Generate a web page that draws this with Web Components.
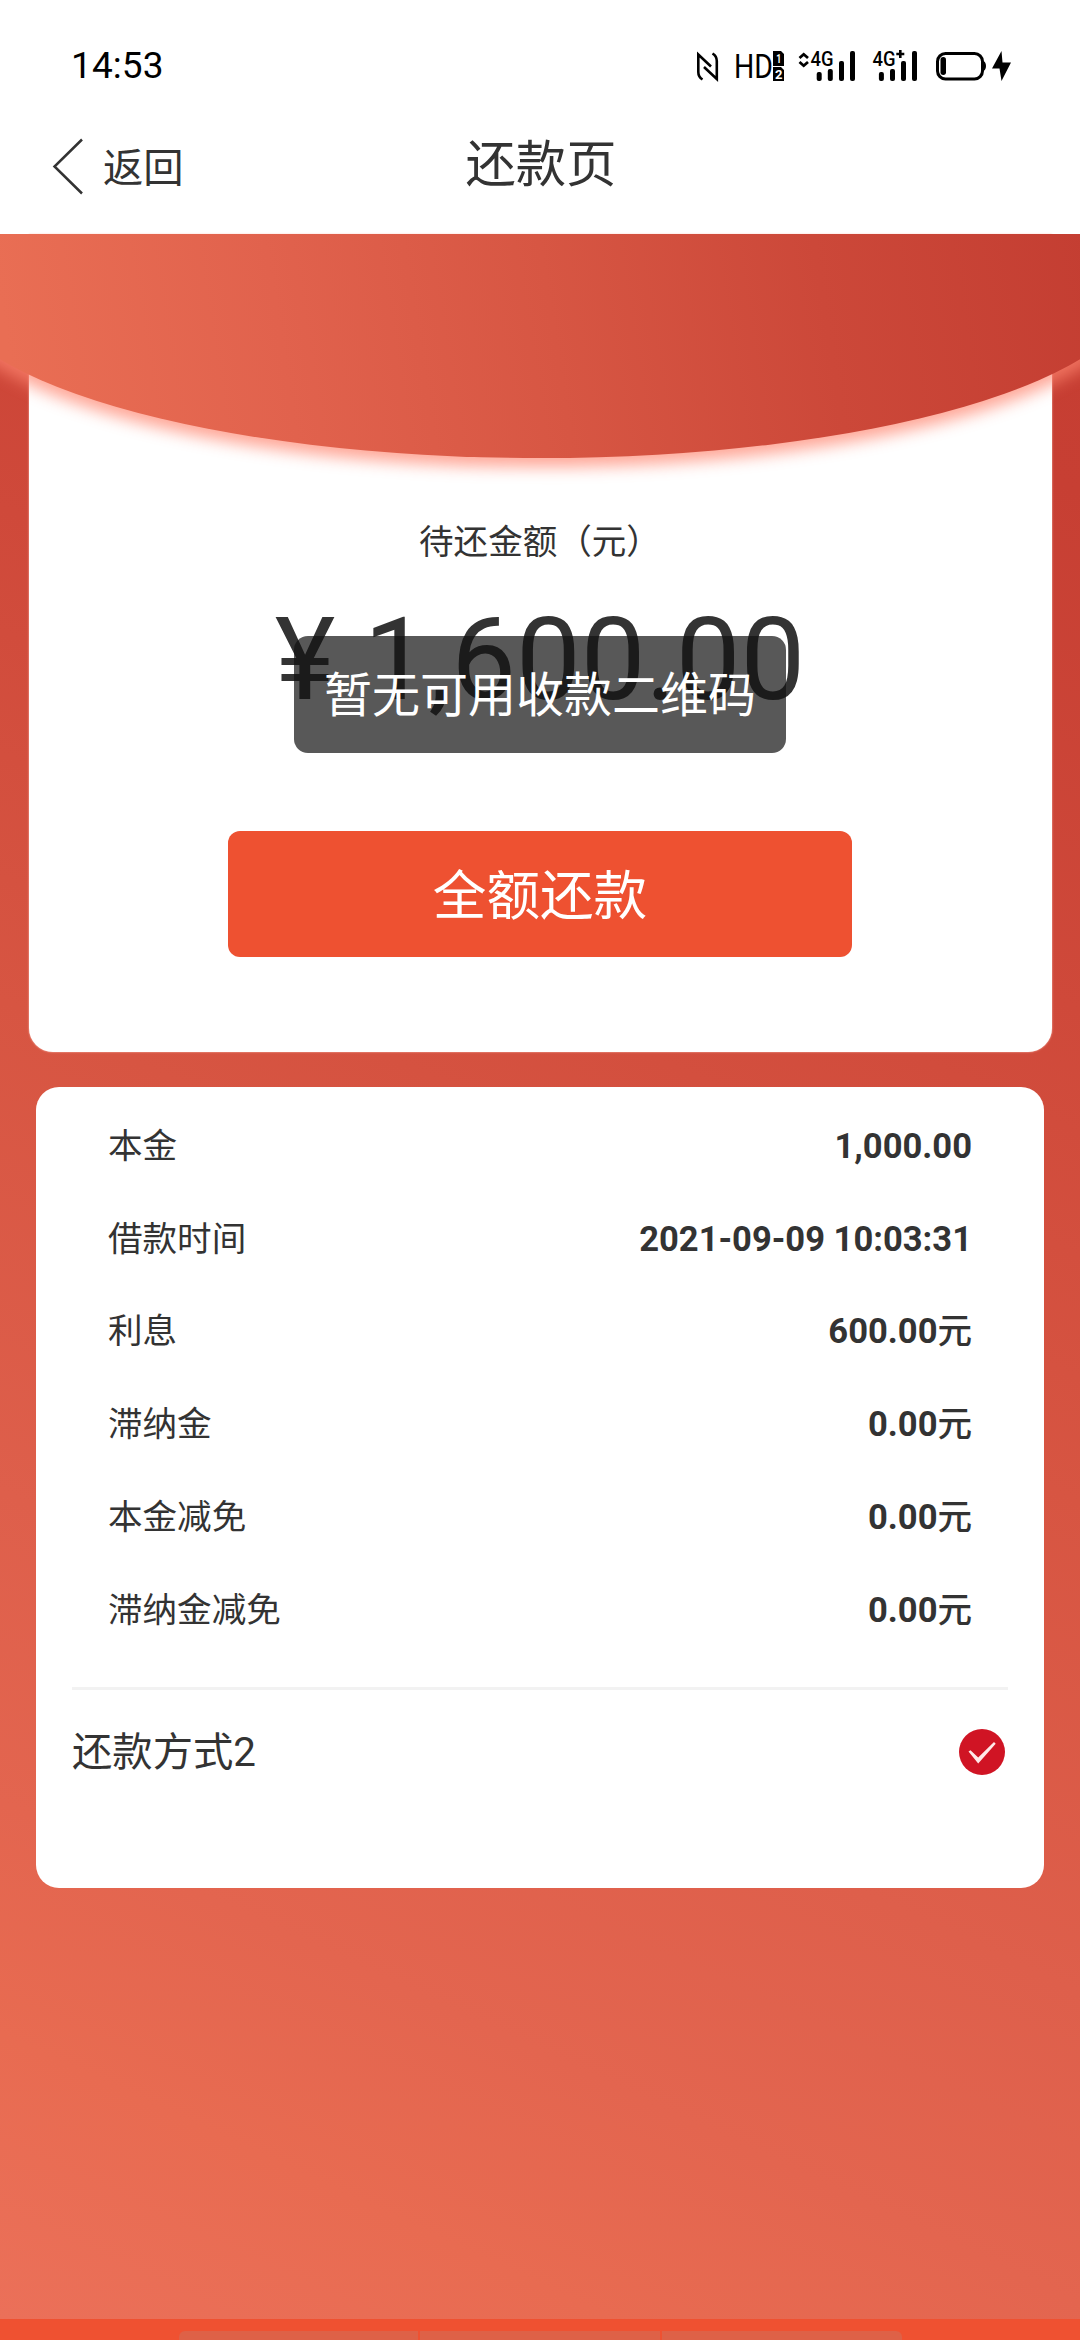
<!DOCTYPE html>
<html lang="zh-CN">
<head>
<meta charset="utf-8">
<title>还款页</title>
<style>
html,body{margin:0;padding:0;background:#fff}
body{width:1080px;height:2340px;overflow:hidden;color:#333;font-family:Roboto,"Noto Sans CJK SC",sans-serif}
</style>
</head>
<body>
<repay-page>
  <status-bar slot="top" time="14:53"></status-bar>
  <nav-header slot="top" back="返回">还款页</nav-header>
  <amount-card label="待还金额（元）" amount="¥ 1,600.00" action="全额还款"></amount-card>
  <detail-card>
    <detail-row label="本金">1,000.00</detail-row>
    <detail-row label="借款时间">2021-09-09 10:03:31</detail-row>
    <detail-row label="利息" unit="元">600.00</detail-row>
    <detail-row label="滞纳金" unit="元">0.00</detail-row>
    <detail-row label="本金减免" unit="元">0.00</detail-row>
    <detail-row label="滞纳金减免" unit="元">0.00</detail-row>
    <pay-method slot="method">还款方式2</pay-method>
  </detail-card>
  <bottom-strip slot="bottom"></bottom-strip>
  <toast-message slot="toast">暂无可用收款二维码</toast-message>
</repay-page>
<script>
const define = (name, render) => customElements.define(name, class extends HTMLElement {
  connectedCallback() {
    if (this.shadowRoot) return;
    this.attachShadow({ mode: 'open' }).innerHTML = render(k => this.getAttribute(k) || '');
  }
});

define('repay-page', () => `
<style>
:host{display:flex;flex-direction:column;width:1080px;height:2340px;position:relative;overflow:hidden}
main{flex:1;min-height:0;display:flex;flex-direction:column;gap:35px;
background:linear-gradient(205deg,#c53d32 0%,#c73f33 10%,#cf493a 30%,#d75542 49%,#de5f4b 68%,#e3654f 80%,#e86b51 89%,#eb7059 100%)}
</style>
<slot name="top"></slot><main><slot></slot></main><slot name="bottom"></slot><slot name="toast"></slot>`);

define('status-bar', a => `
<style>
:host{display:flex;justify-content:space-between;align-items:center;height:90px;box-sizing:border-box;padding:42px 60px 0 71px;color:#000}
time{font-size:37px;line-height:48px;letter-spacing:.1px}
svg{display:block}
text{font-family:Roboto,sans-serif}
</style>
<time>${a('time')}</time>
<svg width="330" height="48" viewBox="690 42 330 48" fill="none" stroke="#000">
  <path d="M702.500 79.500Q698.300 77 698.300 72V54.500L711 66.500M712.500 53.500Q716.800 56 716.800 61V79L704 67" stroke-width="2.600"/>
  <text x="734" y="77.900" font-size="33.500" fill="#000" stroke="none" textLength="39" lengthAdjust="spacingAndGlyphs">HD</text>
  <g fill="#000" stroke="none">
    <path d="M773 51h8l3 3v12h-11zM773 67h8l3 3v11h-11z"/>
    <text x="776.200" y="63" font-size="12" font-weight="700" style="fill:#fff" textLength="5" lengthAdjust="spacingAndGlyphs">1</text>
    <text x="775" y="79" font-size="13" font-weight="700" style="fill:#fff" textLength="7.500" lengthAdjust="spacingAndGlyphs">2</text>
    <text x="810.500" y="66" font-size="20.500" font-weight="500" textLength="23" lengthAdjust="spacingAndGlyphs">4G</text>
    <text x="872.500" y="66" font-size="20.500" font-weight="500" textLength="23" lengthAdjust="spacingAndGlyphs">4G</text>
    <rect x="816.700" y="72" width="5" height="9" rx="2"/><rect x="827.800" y="69" width="5" height="12" rx="2"/><rect x="839" y="61" width="5" height="20" rx="2"/><rect x="850" y="51" width="5" height="30" rx="2"/>
    <rect x="878.900" y="72" width="5" height="9" rx="2"/><rect x="890" y="69" width="5" height="12" rx="2"/><rect x="901" y="61" width="5" height="20" rx="2"/><rect x="912" y="51" width="5" height="30" rx="2"/>
    <rect x="940.500" y="57" width="5.500" height="18" rx="2.700"/>
    <path d="M982 60q4 1.500 4 6t-4 6zM1001.500 51L992 68.500h7.500L1001.500 81L1011 62.500h-8.500z"/>
  </g>
  <path d="M799.500 58L803.700 54.300L808 58M799.500 62L803.700 65.700L808 62" stroke-width="2.800"/>
  <path d="M896.300 54H904.300M900.300 50V58" stroke-width="2.600"/>
  <rect x="937.500" y="53.500" width="45" height="25.500" rx="8" stroke-width="3"/>
</svg>`);

define('nav-header', a => `
<style>
:host{display:grid;grid-template-columns:1fr auto 1fr;height:144px;box-sizing:border-box;background:#fff;line-height:1;padding:0 49px 0 51px}
.back{display:flex;align-items:flex-start;gap:20px;padding-top:48px;font-size:40.300px}
.back span{padding-top:11px;line-height:40px}
h1{margin:0;font-size:50.300px;font-weight:400;line-height:50px;padding-top:50px}
</style>
<div class="back"><svg width="32" height="58" viewBox="50 138 32 58" fill="none" stroke="#333" stroke-width="2.500"><path d="M81 139.500L53.500 166.500L81 193.500"/></svg><span>${a('back')}</span></div>
<h1><slot></slot></h1><i></i>`);

define('amount-card', a => `
<style>
:host{display:grid;height:817.500px;flex:none}
svg,section{grid-area:1/1}
svg{display:block;z-index:1;align-self:start}
section{margin:0 28.500px;background:#fff;border-radius:0 0 24px 24px;display:flex;flex-direction:column;align-items:center;box-shadow:0 0 2px #ffc8bd}
.label{font-size:34.560px;line-height:50px;margin-top:283px}
.amount{font-size:115.200px;line-height:136px;margin-top:25px;white-space:pre}
button{all:unset;box-sizing:border-box;width:624px;height:126px;margin-top:103px;border-radius:12px;background:#ee5131;color:#fff;font-size:53.600px;line-height:126px;padding-top:3px;text-align:center}
</style>
<svg width="1080" height="270" viewBox="0 234 1080 270">
  <defs>
    <linearGradient id="g" gradientUnits="userSpaceOnUse" x1="0" y1="300" x2="1070" y2="130">
      <stop offset="0" stop-color="#e96e54"/><stop offset=".25" stop-color="#e1624d"/><stop offset=".5" stop-color="#d75643"/><stop offset=".75" stop-color="#cc4839"/><stop offset="1" stop-color="#c43e32"/>
    </linearGradient>
    <filter id="b" x="-10%" y="-20%" width="120%" height="140%"><feGaussianBlur stdDeviation="8"/></filter>
  </defs>
  <ellipse cx="540" cy="292" rx="602" ry="175" fill="#ff8570" opacity=".72" filter="url(#b)"/>
  <ellipse cx="540" cy="283" rx="600" ry="175" fill="url(#g)"/>
</svg>
<section><div class="label">${a('label')}</div><div class="amount">${a('amount')}</div><button>${a('action')}</button></section>`);

define('detail-card', () => `
<style>
:host{display:flex;flex-direction:column;flex:none;height:801.500px;box-sizing:border-box;margin:0 36px;padding:13px 36px 0;background:#fff;border-radius:23px}
.rows{display:flex;flex-direction:column;padding:0 36px}
hr{border:0;height:3px;margin:31px 0 0;background:#f2f2f2}
</style>
<div class="rows"><slot></slot></div><hr><slot name="method"></slot>`);

define('detail-row', a => `
<style>
:host{display:flex;justify-content:space-between;align-items:center;height:92.800px;font-size:34.560px;line-height:50px}
b{font-weight:700}
.unit{font-weight:500}
</style>
<span>${a('label')}</span><b><slot></slot><span class="unit">${a('unit')}</span></b>`);

define('pay-method', () => `
<style>
:host{display:flex;justify-content:space-between;align-items:center;height:123px;padding-right:3px;font-size:40.320px;line-height:58px}
span{padding-top:2px}
svg{display:block}
</style>
<span><slot></slot></span>
<svg width="46" height="46" viewBox="0 0 46 46"><circle cx="23" cy="23" r="23" fill="#d01424"/><path d="M9.500 22.500L11.500 21.300L19.200 28.500L35 13L36.700 14.800L19.200 34.500Z" fill="#ffe9e9"/></svg>`);

define('bottom-strip', () => `
<style>
:host{display:flex;justify-content:center;height:21px;flex:none;background:#ef5131}
div{display:flex;gap:2px;width:723px;height:9px;margin-top:12px;border-radius:6px 6px 0 0;overflow:hidden}
i{flex:1;background:#de6147}
</style>
<div><i></i><i></i><i></i></div>`);

define('toast-message', () => `
<style>
:host{display:block;position:absolute;z-index:5;left:294px;top:636px;width:492px;height:117px;box-sizing:border-box;border-radius:14px;background:rgba(17,17,17,.7);color:#fff;font-size:48px;line-height:119px;text-align:center;white-space:nowrap}
</style>
<slot></slot>`);
</script>
</body>
</html>
